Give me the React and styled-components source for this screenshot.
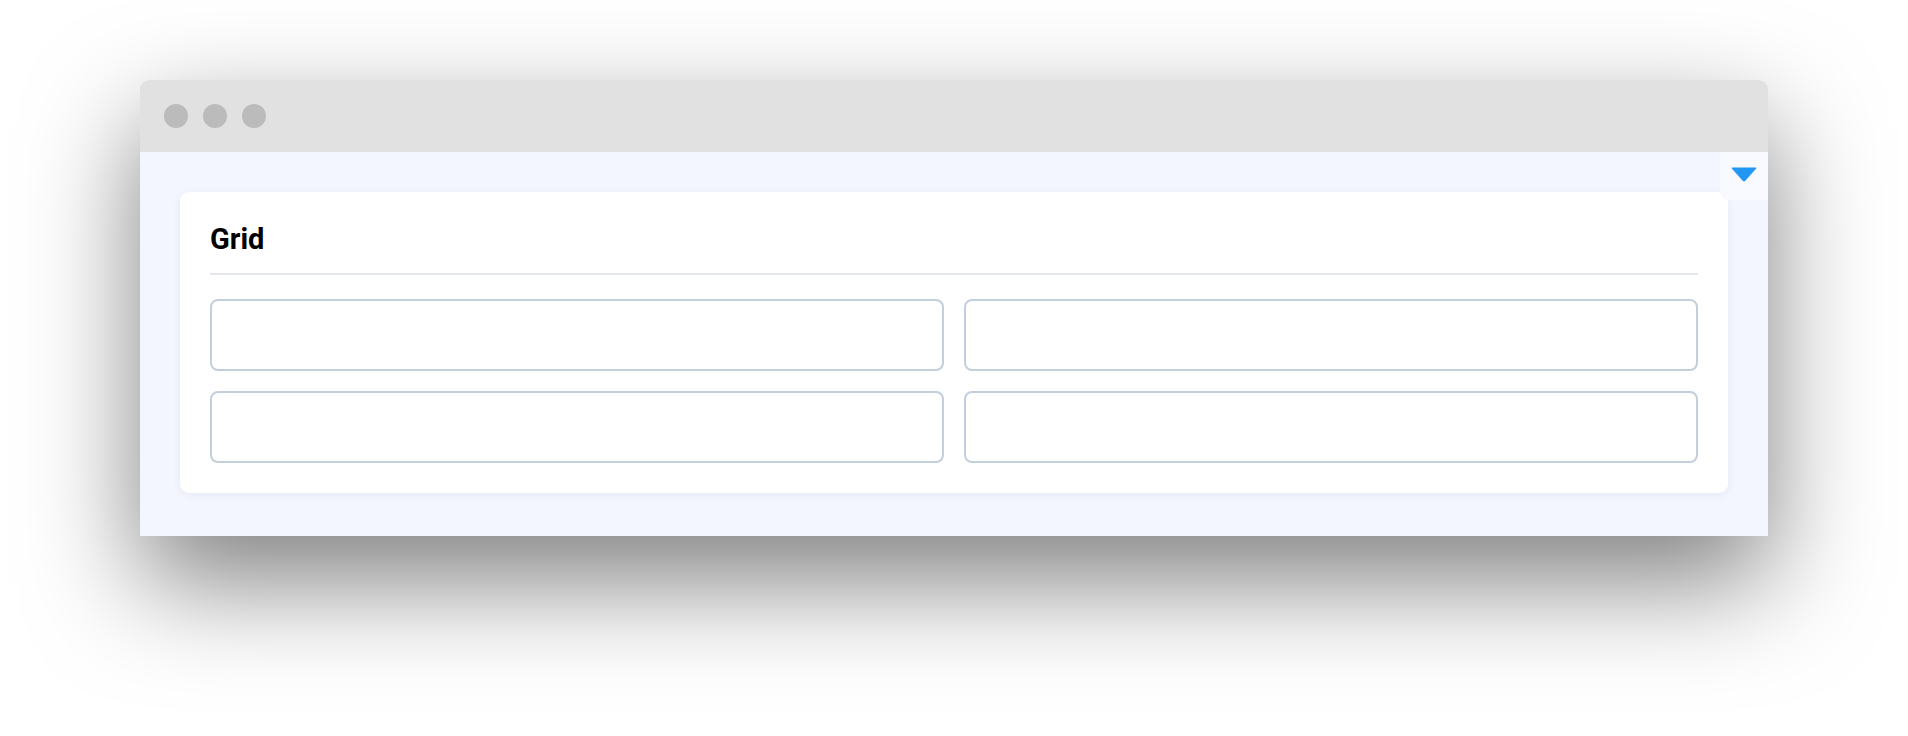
import React from 'react'
import styled, { createGlobalStyle } from 'styled-components'

const GlobalStyle = createGlobalStyle`
    html, body {
        margin: 0;
        padding: 0;
        background: #ffffff;
        font-family: Roboto, "Liberation Sans", sans-serif;
    }
    * { box-sizing: border-box; }
`

const Page = styled.div`
    width: 1908px;
    height: 736px;
    padding: 80px 0 0 140px;
    overflow: hidden;
`

const Window = styled.div`
    width: 1628px;
    border-radius: 9px 9px 0 0;
    box-shadow: 0 45px 110px rgba(0, 0, 0, 0.5);
    overflow: hidden;
`

const TitleBar = styled.div`
    height: 72px;
    background: #e1e1e1;
    display: flex;
    align-items: center;
    gap: 15px;
    padding-left: 24px;
`

const Dot = styled.span`
    width: 24px;
    height: 24px;
    border-radius: 50%;
    background: #bbbbbb;
`

const Content = styled.div`
    position: relative;
    background: #f3f6fe;
    padding: 40px 40px 43px;
`

const Toggle = styled.button`
    position: absolute;
    top: 0;
    right: 0;
    width: 48px;
    height: 48px;
    border: none;
    padding: 0 0 3px;
    border-radius: 0 0 0 9px;
    background: #f8faff;
    display: flex;
    align-items: center;
    justify-content: center;
    cursor: pointer;
`

const Card = styled.section`
    background: #ffffff;
    border-radius: 9px;
    box-shadow: 0 2px 10px rgba(20, 30, 60, 0.06);
    padding: 30px;
`

const Heading = styled.h2`
    margin: 0 0 24px;
    padding-bottom: 17px;
    border-bottom: 2px solid #e3e6ea;
    font-size: 29px;
    line-height: 34px;
    font-weight: 700;
    color: #000;
`

const Grid = styled.div`
    display: grid;
    grid-template-columns: 1fr 1fr;
    gap: 20px;
`

const Cell = styled.div`
    height: 72px;
    border: 2px solid #c3cfdc;
    border-radius: 8px;
    background: #fff;
`

const Caret = () => (
    <svg width="28" height="17" viewBox="0 0 28 17">
        <path d="M2.5 1.5 H25.5 Q27 1.5 26 2.8 L15.3 14.8 Q14 16 12.7 14.8 L2 2.8 Q1 1.5 2.5 1.5 Z" fill="#2196f3" />
    </svg>
)

export default function App() {
    return (
        <>
            <GlobalStyle />
            <Page>
                <Window>
                    <TitleBar>
                        <Dot />
                        <Dot />
                        <Dot />
                    </TitleBar>
                    <Content>
                        <Card>
                            <Heading>Grid</Heading>
                            <Grid>
                                {[0, 1, 2, 3].map(i => <Cell key={i} />)}
                            </Grid>
                        </Card>
                        <Toggle aria-label="toggle"><Caret /></Toggle>
                    </Content>
                </Window>
            </Page>
        </>
    )
}
